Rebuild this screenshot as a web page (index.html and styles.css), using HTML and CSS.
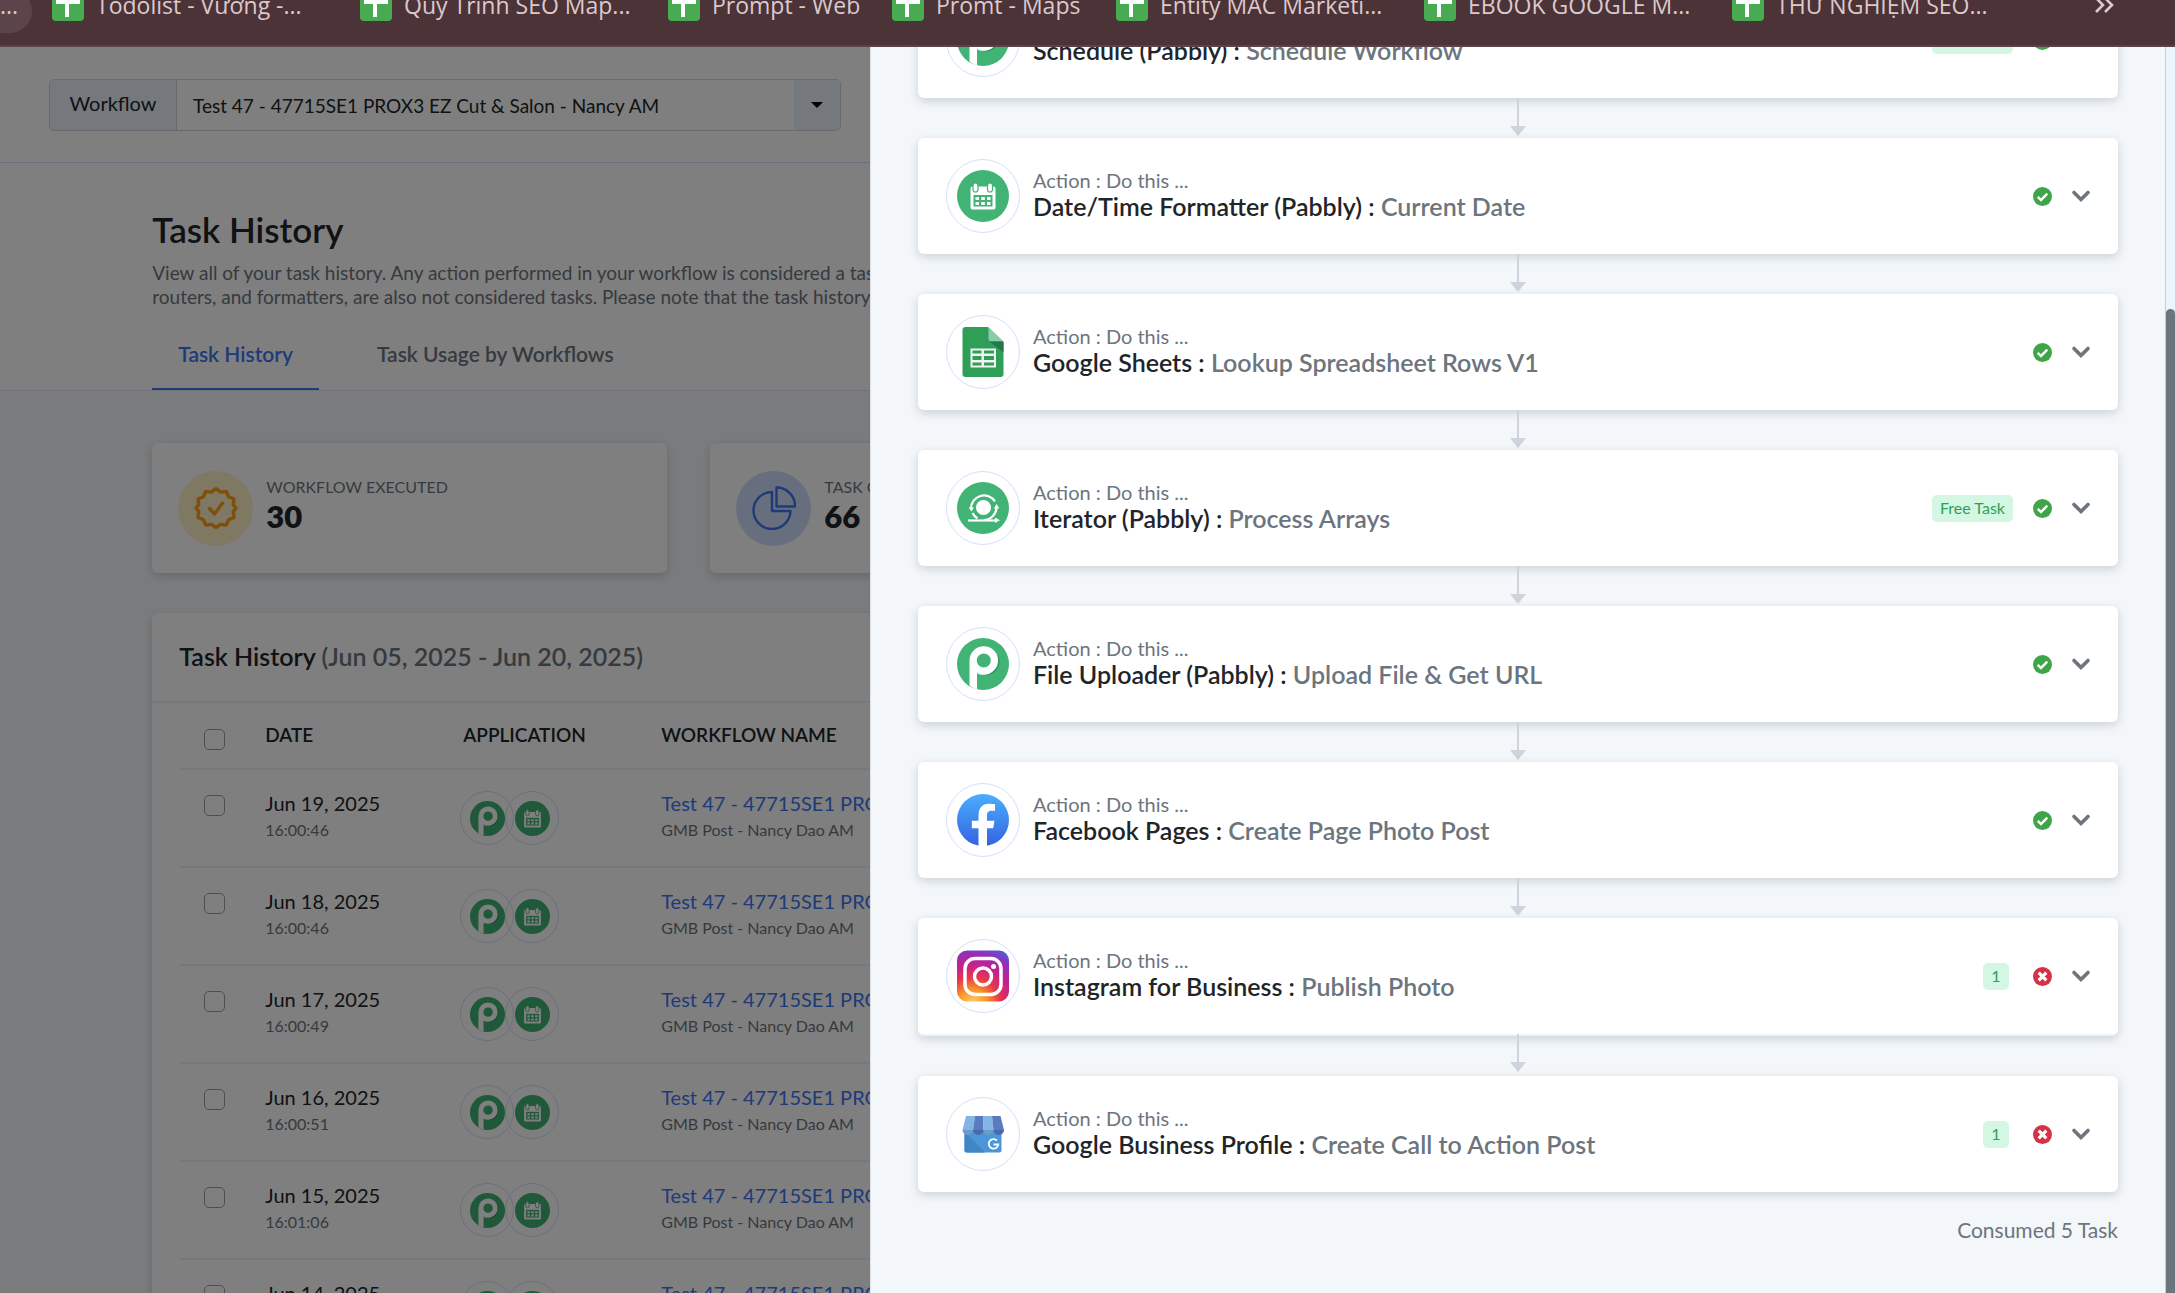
FILE: index.html
```
<!DOCTYPE html>
<html lang="en">
<head>
    <meta charset="UTF-8">
    <title>Task History</title>
    <link rel="stylesheet" href="styles.css">
</head>
<body>
    <!-- shared icons -->
    <svg class="sprite" aria-hidden="true">
        <defs>
            <linearGradient id="fb" x1="0" y1="0" x2="0" y2="1">
                <stop offset="0" stop-color="#4aaeff"/>
                <stop offset="1" stop-color="#3463e0"/>
            </linearGradient>
            <radialGradient id="ig" cx=".3" cy="1.05" r="1.15">
                <stop offset="0" stop-color="#fdd368"/>
                <stop offset=".25" stop-color="#f9942a"/>
                <stop offset=".45" stop-color="#e8394a"/>
                <stop offset=".65" stop-color="#c8218a"/>
                <stop offset=".85" stop-color="#9b2bb0"/>
                <stop offset="1" stop-color="#5b55d6"/>
            </radialGradient>
            <symbol id="i-sheet" viewBox="0 0 32 32">
                <rect width="32" height="32" rx="4" fill="#48ab51"/>
                <path d="M4 11h24v4H17v13h-4V15H4z" fill="#fff"/>
            </symbol>
            <symbol id="i-pabbly" viewBox="0 0 52 52">
                <circle cx="26" cy="26" r="26" fill="#41b375"/>
                <path d="M20 34h1v16.800l-1-.5z" fill="#2f9560"/>
                <path d="M28 37.500c8 0 14.500-6 14.500-14.500 0-2-.6-4-1.500-5.500z" fill="#2f9560"/>
                <path fill-rule="evenodd" d="M12.500 47.500V22.500a14.300 14.300 0 1 1 14.300 14.300c-2.500 0-4.600-.6-6.600-1.600v16.200c-3-.7-5.400-2-7.700-3.900zM26.800 15.500a7 7 0 1 0 0 14 7 7 0 0 0 0-14z" fill="#fff"/>
            </symbol>
            <symbol id="i-calendar" viewBox="0 0 52 52">
                <circle cx="26" cy="26" r="26" fill="#41b375"/>
                <rect x="13.500" y="16.500" width="25" height="23" rx="2" fill="#fff"/>
                <rect x="16" y="13" width="5" height="9" rx="2.500" fill="#fff" stroke="#41b375" stroke-width="1.200"/>
                <rect x="30.500" y="13" width="5" height="9" rx="2.500" fill="#fff" stroke="#41b375" stroke-width="1.200"/>
                <path d="M16.500 25h19v11.500h-19z" fill="#41b375"/>
                <path d="M18.500 27h3.500v3h-3.500zM24.300 27h3.500v3h-3.500zM30 27h3.500v3H30zM18.500 32h3.500v3h-3.500zM24.300 32h3.500v3h-3.500zM30 32h3.500v3H30z" fill="#fff"/>
            </symbol>
            <symbol id="i-gsheets" viewBox="0 0 52 52">
                <path d="M8.500 1H31l15.500 15v32a3 3 0 0 1-3 3h-35a3 3 0 0 1-3-3V4a3 3 0 0 1 3-3z" fill="#2f9f58"/>
                <path d="M31.500 1v11a3 3 0 0 0 3 3.500h12z" fill="#87cda9"/>
                <path d="M32.500 15.500h14v11z" fill="#24774a"/>
                <path d="M13.500 22.500h25.500v19h-25.500z" fill="#f1f1f1"/>
                <path d="M15.500 24.500h9v3h-9zM27 24.500h10v3H27zM15.500 30h9v4h-9zM27 30h10v4H27zM15.500 36.500h9v3h-9zM27 36.500h10v3H27z" fill="#2f9f58"/>
            </symbol>
            <symbol id="i-iterator" viewBox="0 0 52 52">
                <circle cx="26" cy="26" r="26" fill="#41b375"/>
                <circle cx="26.500" cy="25.500" r="7.500" fill="#fff"/>
                <g fill="none" stroke="#fff" stroke-width="2.200">
                    <path d="M38 19.500A13 13 0 0 0 14 26.500"/>
                    <path d="M39.500 25.500A13 13 0 0 1 27 38"/>
                    <path d="M15.500 31a13 13 0 0 0 5 5.500"/>
                    <path d="M11 38.500h29"/>
                </g>
                <path d="M11.500 25.500h5.500l-2.500 4zM36.700 26.500l3-4.500 2.500 4.500zM38 35.500l5 2.800-5 2.700z" fill="#fff"/>
            </symbol>
            <symbol id="i-facebook" viewBox="0 0 52 52">
                <circle cx="26" cy="26" r="26" fill="url(#fb)"/>
                <path d="M21.500 52V34.300H14.800v-7.600h6.700v-4.500C21.500 14 25 9.800 32 9.800c2.300 0 4.600.2 6 .5v6.400h-3.400c-3.400 0-4.600 1.600-4.600 4.700v5.300h7.500l-1.300 7.600H30V52z" fill="#fff"/>
            </symbol>
            <symbol id="i-instagram" viewBox="0 0 52 52">
                <rect y=".5" width="52" height="51" rx="10" fill="url(#ig)"/>
                <g fill="none" stroke="#fff" stroke-width="3.500">
                    <rect x="8" y="8.500" width="36" height="36" rx="10"/>
                    <circle cx="26" cy="26.500" r="8.500"/>
                </g>
                <circle cx="36.500" cy="16.500" r="2.500" fill="#fff"/>
            </symbol>
            <symbol id="i-gbp" viewBox="0 0 52 52">
                <path d="M7.500 22h37v20.500a2 2 0 0 1-2 2h-33a2 2 0 0 1-2-2z" fill="#4a96d9"/>
                <path d="M10 26l18 18.500H9.500a2 2 0 0 1-2-2V26z" fill="#4085c4"/>
                <path d="M9 8h9l-2 14H5.500z" fill="#82b4e4"/>
                <path d="M18 8h8.500v14H16z" fill="#5a7bbf"/>
                <path d="M26.500 8H35l1.500 14h-10z" fill="#82b4e4"/>
                <path d="M35 8h8.500L47 22H36.500z" fill="#5a7bbf"/>
                <path d="M5.500 22H16a5.200 5 0 0 1-10.500 0zM26.500 22h10a5 5 0 0 1-10 0z" fill="#6a9cc8"/>
                <path d="M16 22h10.500a5.200 5 0 0 1-10.500 0zM36.500 22H47a5.200 5 0 0 1-10.500 0z" fill="#4a68a8"/>
                <path d="M40 32.500a4.800 4.800 0 1 0 1.300 4h-4.800" fill="none" stroke="#fff" stroke-width="1.800"/>
            </symbol>
            <symbol id="i-ok" viewBox="0 0 20 20">
                <circle cx="10" cy="10" r="10" fill="#3fa548"/>
                <path d="M5 10.500l3.400 3.300L15 7" fill="none" stroke="#fff" stroke-width="2.600"/>
            </symbol>
            <symbol id="i-fail" viewBox="0 0 20 20">
                <circle cx="10" cy="10" r="10" fill="#d63145"/>
                <path d="M6 6l8 8M14 6l-8 8" fill="none" stroke="#fff" stroke-width="3.400"/>
            </symbol>
            <symbol id="i-chevron" viewBox="0 0 20 14">
                <path d="M3 3.500l7 7 7-7" fill="none" stroke="#6c757d" stroke-width="3.600" stroke-linecap="round"/>
            </symbol>
        </defs>
    </svg>

    <nav class="bookmarks" aria-label="Bookmarks">
        <a class="bookmark-cut" href="#">...</a>
        <a class="bookmark" href="#"><svg><use href="#i-sheet"/></svg>Todolist - Vương -...</a>
        <a class="bookmark" href="#"><svg><use href="#i-sheet"/></svg>Quy Trình SEO Map...</a>
        <a class="bookmark short" href="#"><svg><use href="#i-sheet"/></svg>Prompt - Web</a>
        <a class="bookmark short" href="#"><svg><use href="#i-sheet"/></svg>Promt - Maps</a>
        <a class="bookmark" href="#"><svg><use href="#i-sheet"/></svg>Entity MAC Marketi...</a>
        <a class="bookmark" href="#"><svg><use href="#i-sheet"/></svg>EBOOK GOOGLE M...</a>
        <a class="bookmark" href="#"><svg><use href="#i-sheet"/></svg>THỬ NGHIỆM SEO...</a>
        <button class="bookmark-more" type="button" aria-label="More bookmarks">
            <svg viewBox="0 0 20 16"><path d="M2 1l7 7-7 7M11 1l7 7-7 7" fill="none" stroke="currentColor" stroke-width="2.600"/></svg>
        </button>
    </nav>

    <div class="viewport">
        <main class="page">
            <div class="topbar">
                <div class="picker">
                    <label for="workflow">Workflow</label>
                    <select id="workflow">
                        <option>Test 47 - 47715SE1 PROX3 EZ Cut &amp; Salon - Nancy AM</option>
                    </select>
                    <span class="picker-arrow"></span>
                </div>
            </div>

            <header class="page-head">
                <div class="container">
                    <h1>Task History</h1>
                    <p>View all of your task history. Any action performed in your workflow is considered a task. Triggers and internal<br>routers, and formatters, are also not considered tasks. Please note that the task history will be kept</p>
                    <div class="tabs">
                        <a class="tab active" href="#">Task History</a>
                        <a class="tab" href="#">Task Usage by Workflows</a>
                    </div>
                </div>
            </header>

            <div class="container">
                <div class="stats">
                    <div class="stat">
                        <span class="stat-icon yellow">
                            <svg viewBox="0 0 44 44" fill="none" stroke="#ff9f1a" stroke-width="3.400" stroke-linecap="round" stroke-linejoin="round">
                                <path d="M22 2.500l4.500 3.600 5.800-.6 2.300 5.300 5.300 2.300-.6 5.800L42 22l-2.700 3.600.6 5.800-5.300 2.300-2.300 5.300-5.800-.6L22 41.500l-4.500-3.100-5.800.6-2.300-5.300-5.300-2.300.6-5.800L2 22l2.700-3.100-.6-5.800 5.300-2.300 2.300-5.300 5.800.6z"/>
                                <path d="M15.500 22.500l5 5.500 8-11"/>
                            </svg>
                        </span>
                        <div>
                            <div class="stat-label">WORKFLOW EXECUTED</div>
                            <div class="stat-value">30</div>
                        </div>
                    </div>
                    <div class="stat">
                        <span class="stat-icon blue">
                            <svg viewBox="0 0 44 44" fill="none" stroke="#3f74f0" stroke-width="2.400" stroke-linejoin="round">
                                <path d="M20 6v19h18.500A18.500 18.500 0 1 1 20 6z"/>
                                <path d="M24.500 1.500v19h18.500a18.500 18.500 0 0 0-18.500-19z"/>
                            </svg>
                        </span>
                        <div>
                            <div class="stat-label">TASK CONSUMED</div>
                            <div class="stat-value">66</div>
                        </div>
                    </div>
                    <div class="stat"></div>
                </div>

                <section class="history">
                    <h2>Task History <span>(Jun 05, 2025 - Jun 20, 2025)</span></h2>
                    <div class="table-wrap">
                        <table>
                            <thead>
                                <tr>
                                    <th class="col-check"><input type="checkbox" aria-label="Select all"></th>
                                    <th class="col-mid">DATE</th>
                                    <th class="col-mid">APPLICATION</th>
                                    <th>WORKFLOW NAME</th>
                                </tr>
                            </thead>
                            <tbody>
                                <tr>
                                    <td><input type="checkbox" aria-label="Select Jun 19"></td>
                                    <td>Jun 19, 2025<small>16:00:46</small></td>
                                    <td><div class="apps"><span class="app"><svg><use href="#i-pabbly"/></svg></span><span class="app"><svg><use href="#i-calendar"/></svg></span></div></td>
                                    <td><a href="#">Test 47 - 47715SE1 PROX3 EZ Cut</a><small>GMB Post - Nancy Dao AM</small></td>
                                </tr>
                                <tr>
                                    <td><input type="checkbox" aria-label="Select Jun 18"></td>
                                    <td>Jun 18, 2025<small>16:00:46</small></td>
                                    <td><div class="apps"><span class="app"><svg><use href="#i-pabbly"/></svg></span><span class="app"><svg><use href="#i-calendar"/></svg></span></div></td>
                                    <td><a href="#">Test 47 - 47715SE1 PROX3 EZ Cut</a><small>GMB Post - Nancy Dao AM</small></td>
                                </tr>
                                <tr>
                                    <td><input type="checkbox" aria-label="Select Jun 17"></td>
                                    <td>Jun 17, 2025<small>16:00:49</small></td>
                                    <td><div class="apps"><span class="app"><svg><use href="#i-pabbly"/></svg></span><span class="app"><svg><use href="#i-calendar"/></svg></span></div></td>
                                    <td><a href="#">Test 47 - 47715SE1 PROX3 EZ Cut</a><small>GMB Post - Nancy Dao AM</small></td>
                                </tr>
                                <tr>
                                    <td><input type="checkbox" aria-label="Select Jun 16"></td>
                                    <td>Jun 16, 2025<small>16:00:51</small></td>
                                    <td><div class="apps"><span class="app"><svg><use href="#i-pabbly"/></svg></span><span class="app"><svg><use href="#i-calendar"/></svg></span></div></td>
                                    <td><a href="#">Test 47 - 47715SE1 PROX3 EZ Cut</a><small>GMB Post - Nancy Dao AM</small></td>
                                </tr>
                                <tr>
                                    <td><input type="checkbox" aria-label="Select Jun 15"></td>
                                    <td>Jun 15, 2025<small>16:01:06</small></td>
                                    <td><div class="apps"><span class="app"><svg><use href="#i-pabbly"/></svg></span><span class="app"><svg><use href="#i-calendar"/></svg></span></div></td>
                                    <td><a href="#">Test 47 - 47715SE1 PROX3 EZ Cut</a><small>GMB Post - Nancy Dao AM</small></td>
                                </tr>
                                <tr>
                                    <td><input type="checkbox" aria-label="Select Jun 14"></td>
                                    <td>Jun 14, 2025<small>16:00:46</small></td>
                                    <td><div class="apps"><span class="app"><svg><use href="#i-pabbly"/></svg></span><span class="app"><svg><use href="#i-calendar"/></svg></span></div></td>
                                    <td><a href="#">Test 47 - 47715SE1 PROX3 EZ Cut</a><small>GMB Post - Nancy Dao AM</small></td>
                                </tr>
                            </tbody>
                        </table>
                    </div>
                </section>
            </div>
        </main>

        <div class="backdrop"></div>

        <aside class="drawer">
            <ol class="steps">
                <li class="step">
                    <span class="step-icon"><svg><use href="#i-pabbly"/></svg></span>
                    <div class="step-text"><small>Trigger : When this happens ...</small><h3>Schedule (Pabbly) : <span>Schedule Workflow</span></h3></div>
                    <span class="badge">Free Task</span>
                    <svg class="state"><use href="#i-ok"/></svg>
                    <button type="button" aria-label="Expand"><svg><use href="#i-chevron"/></svg></button>
                </li>
                <li class="step">
                    <span class="step-icon"><svg><use href="#i-calendar"/></svg></span>
                    <div class="step-text"><small>Action : Do this ...</small><h3>Date/Time Formatter (Pabbly) : <span>Current Date</span></h3></div>
                    <svg class="state"><use href="#i-ok"/></svg>
                    <button type="button" aria-label="Expand"><svg><use href="#i-chevron"/></svg></button>
                </li>
                <li class="step">
                    <span class="step-icon"><svg><use href="#i-gsheets"/></svg></span>
                    <div class="step-text"><small>Action : Do this ...</small><h3>Google Sheets : <span>Lookup Spreadsheet Rows V1</span></h3></div>
                    <svg class="state"><use href="#i-ok"/></svg>
                    <button type="button" aria-label="Expand"><svg><use href="#i-chevron"/></svg></button>
                </li>
                <li class="step">
                    <span class="step-icon"><svg><use href="#i-iterator"/></svg></span>
                    <div class="step-text"><small>Action : Do this ...</small><h3>Iterator (Pabbly) : <span>Process Arrays</span></h3></div>
                    <span class="badge">Free Task</span>
                    <svg class="state"><use href="#i-ok"/></svg>
                    <button type="button" aria-label="Expand"><svg><use href="#i-chevron"/></svg></button>
                </li>
                <li class="step">
                    <span class="step-icon"><svg><use href="#i-pabbly"/></svg></span>
                    <div class="step-text"><small>Action : Do this ...</small><h3>File Uploader (Pabbly) : <span>Upload File &amp; Get URL</span></h3></div>
                    <svg class="state"><use href="#i-ok"/></svg>
                    <button type="button" aria-label="Expand"><svg><use href="#i-chevron"/></svg></button>
                </li>
                <li class="step">
                    <span class="step-icon"><svg><use href="#i-facebook"/></svg></span>
                    <div class="step-text"><small>Action : Do this ...</small><h3>Facebook Pages : <span>Create Page Photo Post</span></h3></div>
                    <svg class="state"><use href="#i-ok"/></svg>
                    <button type="button" aria-label="Expand"><svg><use href="#i-chevron"/></svg></button>
                </li>
                <li class="step open">
                    <span class="step-icon"><svg><use href="#i-instagram"/></svg></span>
                    <div class="step-text"><small>Action : Do this ...</small><h3>Instagram for Business : <span>Publish Photo</span></h3></div>
                    <span class="badge count">1</span>
                    <svg class="state"><use href="#i-fail"/></svg>
                    <button type="button" aria-label="Expand"><svg><use href="#i-chevron"/></svg></button>
                </li>
                <li class="step">
                    <span class="step-icon"><svg><use href="#i-gbp"/></svg></span>
                    <div class="step-text"><small>Action : Do this ...</small><h3>Google Business Profile : <span>Create Call to Action Post</span></h3></div>
                    <span class="badge count">1</span>
                    <svg class="state"><use href="#i-fail"/></svg>
                    <button type="button" aria-label="Expand"><svg><use href="#i-chevron"/></svg></button>
                </li>
            </ol>
            <p class="consumed">Consumed 5 Task</p>
            <div class="scrollbar"><div class="thumb"></div></div>
        </aside>
    </div>
</body>
</html>
```
FILE: styles.css
```
*{
    box-sizing: border-box;
    margin: 0;
    padding: 0;
}
body{
    height: 100vh;
    display: flex;
    flex-direction: column;
    overflow: hidden;
    font-family: Lato, "Liberation Sans", sans-serif;
    font-size: 20px;
    color: #212529;
}
a{
    text-decoration: none;
}
button{
    border: 0;
    background: none;
}
svg{
    display: block;
}
.sprite{
    position: absolute;
    width: 0;
    height: 0;
}

/* browser bookmarks */
.bookmarks{
    flex: none;
    display: flex;
    align-items: flex-end;
    height: 47px;
    padding-bottom: 24px;
    background: #4c3337;
    border-bottom: 2px solid #574348;
    overflow: hidden;
    font-family: "Open Sans", "Noto Sans", sans-serif;
    font-size: 23px;
    line-height: 32px;
}
.bookmarks a,
.bookmark-more{
    color: #dcc9cc;
}
.bookmark-cut{
    width: 32px;
    height: 44px;
    margin: 0 20px -12px 0;
    border-radius: 0 22px 22px 0;
    background: #5c454a;
}
.bookmark{
    display: flex;
    gap: 12px;
    width: 308px;
    white-space: nowrap;
}
.bookmark.short{
    width: 224px;
}
.bookmark svg{
    flex: none;
    width: 32px;
    height: 32px;
}
.bookmark-more{
    margin: 0 61px 0 auto;
    padding-bottom: 8px;
}
.bookmark-more svg{
    width: 20px;
    height: 16px;
}

/* page behind the drawer */
.viewport{
    position: relative;
    flex: 1;
    min-height: 0;
    overflow: hidden;
    background: #f3f7fa;
}
.topbar{
    padding: 32px 49px 31px;
    background: #fff;
    border-bottom: 1px solid #d5dff5;
}
.picker{
    display: flex;
    max-width: 792px;
    height: 52px;
    border: 1px solid #d0d5da;
    border-radius: 5px;
    overflow: hidden;
}
.picker label{
    width: 127px;
    line-height: 46px;
    text-align: center;
    background: #eaf1fb;
    border-right: 1px solid #d0d5da;
}
.picker select{
    flex: 1;
    padding: 0 16px;
    appearance: none;
    border: 0;
    background: #fff;
    color: #212529;
    font: inherit;
    font-size: 19px;
}
.picker-arrow{
    display: grid;
    place-items: center;
    width: 46px;
    background: #eaf1fb;
}
.picker-arrow::after{
    content: "";
    border: 6px solid transparent;
    border-top-color: #000;
    border-bottom: 0;
}
.container{
    width: 75%;
    margin-left: 7%;
}
.page-head{
    padding-top: 42px;
    background: #fff;
    border-bottom: 1px solid #e3e7ee;
}
.page-head h1{
    font-size: 35px;
    font-weight: 600;
    line-height: 48px;
}
.page-head p{
    margin-top: 8px;
    color: #6c757d;
    font-size: 19px;
    line-height: 24px;
    white-space: nowrap;
}
.tabs{
    display: flex;
    gap: 32px;
    margin-top: 13px;
}
.tab{
    padding: 18px 26px 20px;
    border-bottom: 2px solid transparent;
    color: #6c757d;
    font-size: 21px;
    font-weight: 600;
    line-height: 28px;
}
.tab.active{
    color: #3f74f0;
    border-color: #3f74f0;
}
.stats{
    display: grid;
    grid-template-columns: repeat(3, 1fr);
    gap: 43px;
    margin: 52px 0 40px;
}
.stat,
.history,
.step{
    background: #fff;
    border-radius: 6px;
    box-shadow: 0 3px 10px rgba(60, 75, 90, .22);
}
.stat{
    display: flex;
    align-items: center;
    gap: 13px;
    height: 130px;
    padding: 0 26px;
}
.stat-icon{
    display: grid;
    place-items: center;
    width: 75px;
    height: 75px;
    border-radius: 50%;
}
.stat-icon svg{
    width: 44px;
    height: 44px;
}
.yellow{
    background: #fff0c4;
}
.blue{
    background: #cfdffc;
}
.stat-label{
    color: #6c757d;
    font-size: 16px;
    line-height: 24px;
}
.stat-value{
    padding-bottom: 8px;
    font-size: 31px;
    font-weight: 800;
    line-height: 34px;
}
.history h2{
    padding: 27px 27px 29px;
    border-bottom: 2px solid #eaf1fb;
    font-size: 25px;
    font-weight: 600;
    line-height: 32px;
}
.history h2 span{
    color: #6c757d;
}
.table-wrap{
    padding: 0 27px;
}
table{
    width: 100%;
    border-collapse: collapse;
}
th,
td{
    border-bottom: 2px solid #eaf1fb;
    text-align: left;
    vertical-align: top;
    white-space: nowrap;
    line-height: 28px;
}
th{
    height: 66px;
    padding-top: 18px;
    font-size: 19px;
    font-weight: 600;
}
td{
    height: 98px;
    padding-top: 19px;
}
.col-check{
    width: 86px;
}
.col-mid{
    width: 198px;
}
td a{
    color: #3f74f0;
}
td small{
    display: block;
    color: #6c757d;
    font-size: 16px;
    line-height: 26px;
}
input[type=checkbox]{
    display: block;
    width: 21px;
    height: 21px;
    margin: 6px 0 0 25px;
    appearance: none;
    border: 1px solid #9aa0a6;
    border-radius: 5px;
}
th input[type=checkbox]{
    margin-top: 8px;
}
.apps{
    display: flex;
    margin-left: -3px;
}
.app{
    display: grid;
    place-items: center;
    width: 54px;
    height: 54px;
    margin: 2px -9px 0 0;
    border: 1px solid #d5dffb;
    border-radius: 50%;
}
.app svg{
    width: 35px;
    height: 35px;
}
.backdrop{
    position: absolute;
    inset: 0;
    background: rgba(0, 0, 0, .5);
}

/* step list, scrolled down to its end */
.drawer{
    position: absolute;
    top: 0;
    right: 0;
    bottom: 0;
    display: flex;
    flex-direction: column;
    justify-content: flex-end;
    width: 60%;
    padding: 0 57px 49px 47px;
    border-left: 1px solid #dee2e6;
    background: #f3f7fa;
    overflow: hidden;
}
.steps{
    display: grid;
    gap: 40px;
    list-style: none;
}
.step{
    position: relative;
    display: flex;
    align-items: center;
    height: 116px;
    padding: 0 24px 0 28px;
}
.step.open{
    height: 118px;
    border-bottom: 2px solid #eef3fb;
}
.step-icon{
    display: grid;
    place-items: center;
    width: 74px;
    height: 74px;
    margin-right: 13px;
    border: 1px solid #d5dffb;
    border-radius: 50%;
}
.step-icon svg{
    width: 52px;
    height: 52px;
}
.step-text{
    flex: 1;
    padding-bottom: 4px;
}
.step-text small{
    display: block;
    color: #6c757d;
    font-size: 20px;
    line-height: 24px;
}
.step-text h3{
    font-size: 25px;
    font-weight: 600;
    line-height: 28px;
}
.step-text span,
.consumed{
    color: #6c757d;
}
.badge{
    min-width: 26px;
    padding: 0 8px 2px;
    margin-right: 20px;
    border-radius: 5px;
    background: #d3f7e3;
    color: #2f9f58;
    font-size: 16px;
    line-height: 25px;
    text-align: center;
}
.badge.count{
    margin-right: 24px;
}
.state{
    width: 19px;
    height: 19px;
    margin-right: 16px;
}
.step button{
    padding: 3px;
}
.step button svg{
    width: 20px;
    height: 14px;
}
/* connector down to the next step */
.step:not(:last-child)::before{
    content: "";
    position: absolute;
    top: 100%;
    left: calc(50% - 1px);
    width: 2px;
    height: 32px;
    background: #cfd4dc;
}
.step:not(:last-child)::after{
    content: "";
    position: absolute;
    top: calc(100% + 28px);
    left: calc(50% - 8px);
    border: 8px solid transparent;
    border-top: 10px solid #cfd4dc;
    border-bottom: 0;
}
.consumed{
    margin-top: 24px;
    font-size: 21px;
    line-height: 28px;
    text-align: right;
}
.scrollbar{
    position: absolute;
    top: 0;
    right: 0;
    bottom: 0;
    display: flex;
    flex-direction: column;
    justify-content: flex-end;
    width: 10px;
    border-left: 1px solid #c8cdd2;
    background: #ecf5ff;
}
.thumb{
    height: 79%;
    border-radius: 5px 5px 0 0;
    background: #6c757d;
}
```
